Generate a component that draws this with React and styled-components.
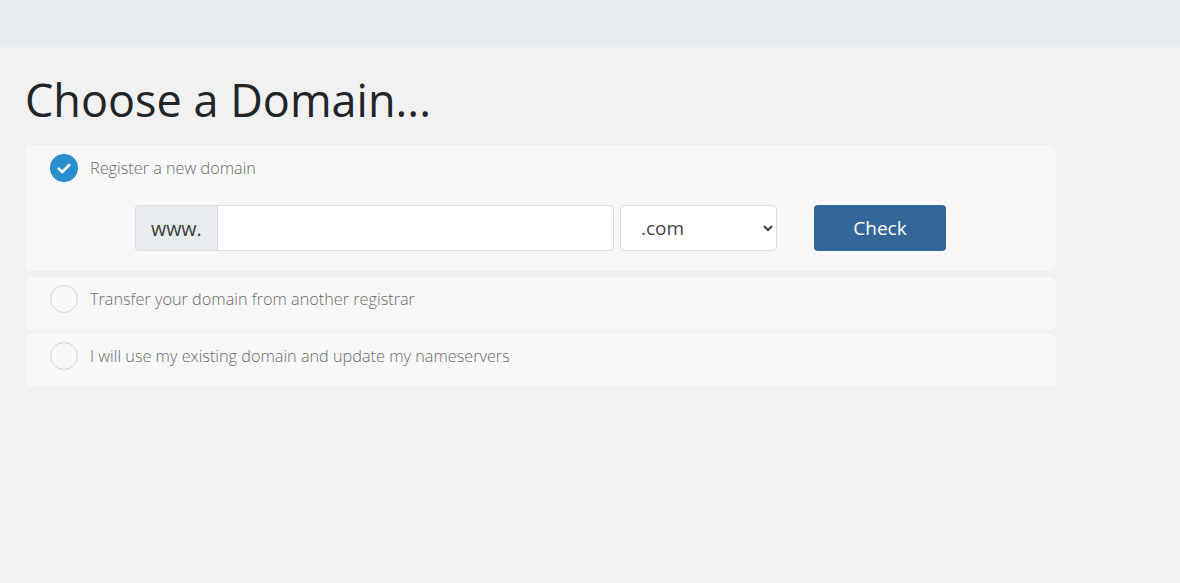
import React from "react";
import styled, { createGlobalStyle } from "styled-components";

const Global = createGlobalStyle`
  html, body { margin: 0; padding: 0; background: #f1f1f1; }
  body { font-family: "Open Sans", "Noto Sans", sans-serif; color: #212529; }
  * { box-sizing: border-box; }
`;

const TopBar = styled.div`
  height: 47px;
  background: #e9ecef;
`;

const Main = styled.main`
  padding: 0 125px 0 25px;
  max-width: 1081px;
`;

const Title = styled.h1`
  margin: 26px 0 18px 0;
  font-size: 45px;
  font-weight: 400;
  line-height: 54px;
  color: #212529;
`;

const Options = styled.div`
  display: flex;
  flex-direction: column;
  gap: 5.5px;
  width: 1031px;
`;

const Panel = styled.div`
  background: #f8f8f8;
  border-radius: 6px;
  padding: ${(p) => (p.$open ? "9px 25px 20px" : "8px 25px 16px")};
`;

const OptionRow = styled.label`
  display: flex;
  align-items: center;
  gap: 12px;
  min-height: 28px;
  cursor: pointer;
`;

const Radio = styled.span`
  width: 28px;
  height: 28px;
  border-radius: 50%;
  flex: none;
  display: flex;
  align-items: center;
  justify-content: center;
  background: ${(p) => (p.$checked ? "#2a8dcc" : "transparent")};
  border: ${(p) => (p.$checked ? "none" : "1.5px solid #d6d3cd")};
`;

const OptionText = styled.span`
  font-size: 16.25px;
  font-weight: 300;
  color: #6a6a6a;
`;

const DomainRow = styled.div`
  display: flex;
  align-items: center;
  margin: 23px 0 0 85px;
`;

const InputGroup = styled.div`
  display: flex;
  width: 479px;
  height: 46px;
`;

const Addon = styled.span`
  display: flex;
  align-items: center;
  padding: 0 15px 0 15px;
  background: #e9ecef;
  border: 1px solid #dcdcdc;
  border-right: none;
  border-radius: 4px 0 0 4px;
  font-size: 19.6px;
  color: #3c3c3c;
`;

const TextInput = styled.input`
  flex: 1;
  min-width: 0;
  border: 1px solid #dcdcdc;
  border-radius: 0 4px 4px 0;
  background: #fff;
  font-family: inherit;
  font-size: 19px;
  padding: 0 12px;
  outline: none;
`;

const Select = styled.select`
  margin-left: 6px;
  width: 157px;
  height: 46px;
  border: 1px solid #dcdcdc;
  border-radius: 4px;
  background: #fff;
  font-family: inherit;
  font-size: 19px;
  color: #444;
  padding: 0 8px 0 16px;
  outline: none;
`;

const CheckButton = styled.button`
  margin-left: 37px;
  width: 132px;
  height: 46px;
  border: none;
  border-radius: 4px;
  background: #336699;
  color: #fff;
  font-family: inherit;
  font-size: 19px;
  cursor: pointer;
`;

const Tick = () => (
  <svg width="14" height="11" viewBox="0 0 14 11" fill="none">
    <path d="M1.8 5.6 L5.3 9 L12.2 2" stroke="#fff" strokeWidth="2.6" strokeLinecap="round" strokeLinejoin="round" />
  </svg>
);

export default function App() {
  return (
    <>
      <Global />
      <TopBar />
      <Main>
        <Title>Choose a Domain...</Title>
        <Options>
          <Panel $open>
            <OptionRow>
              <Radio $checked>
                <Tick />
              </Radio>
              <OptionText>Register a new domain</OptionText>
            </OptionRow>
            <DomainRow>
              <InputGroup>
                <Addon>www.</Addon>
                <TextInput type="text" />
              </InputGroup>
              <Select defaultValue=".com">
                <option>.com</option>
                <option>.net</option>
                <option>.org</option>
              </Select>
              <CheckButton>Check</CheckButton>
            </DomainRow>
          </Panel>
          <Panel>
            <OptionRow>
              <Radio />
              <OptionText>Transfer your domain from another registrar</OptionText>
            </OptionRow>
          </Panel>
          <Panel>
            <OptionRow>
              <Radio />
              <OptionText>I will use my existing domain and update my nameservers</OptionText>
            </OptionRow>
          </Panel>
        </Options>
      </Main>
    </>
  );
}
